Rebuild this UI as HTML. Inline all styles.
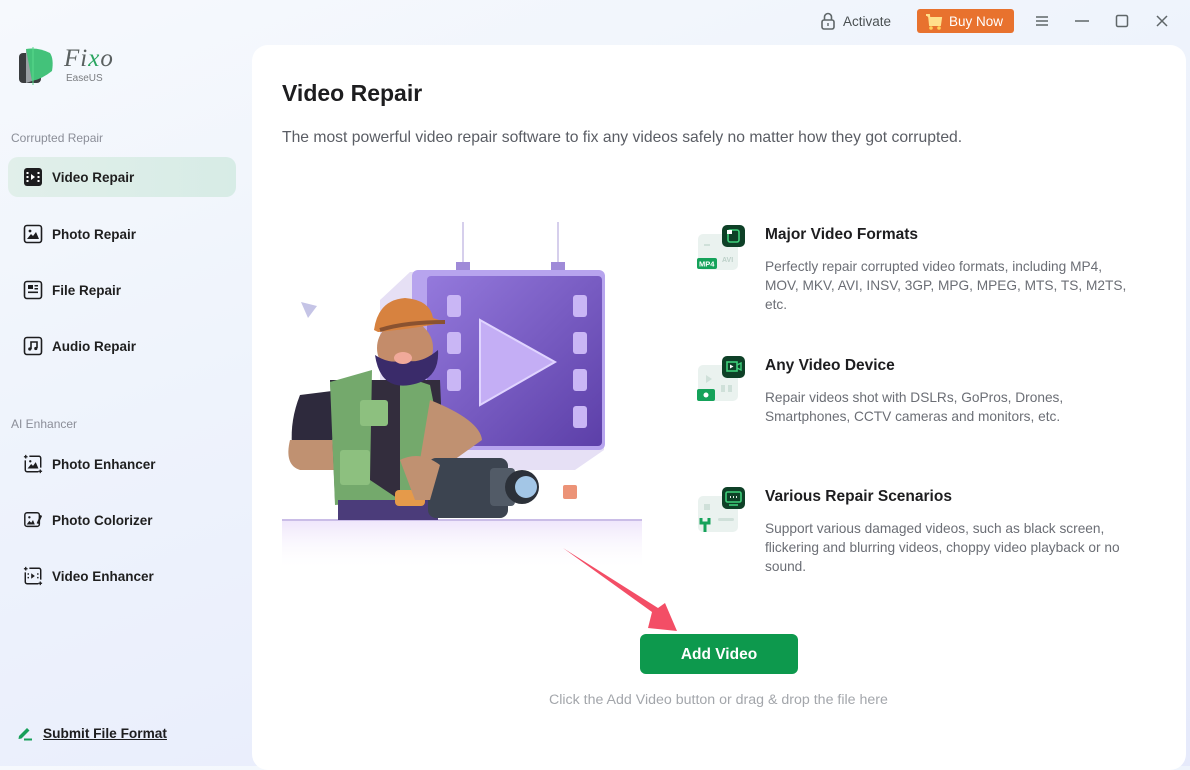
<!DOCTYPE html>
<html><head><meta charset="utf-8"><style>
*{margin:0;padding:0;box-sizing:border-box}
body{width:1190px;height:766px;overflow:hidden;font-family:"Liberation Sans",sans-serif;background:linear-gradient(160deg,#f6f9fd 0%,#eef3fc 40%,#e6eafb 100%);position:relative;color:#1d1d1f}
.abs{position:absolute}
.nav{position:absolute;left:8px;width:228px;height:40px;border-radius:10px;display:flex;align-items:center;padding-left:15px;font-size:13.5px;font-weight:bold;color:#1f1f1f}
.nav svg{margin-right:9px}
.sec{position:absolute;left:11px;font-size:12px;color:#8b8e98}
.panel{position:absolute;left:252px;top:45px;width:934px;height:725px;background:#fff;border-radius:16px}
.ft{position:absolute;left:765px;font-size:15.5px;font-weight:bold;color:#1d1d1f}
.fd{position:absolute;left:765px;width:420px;font-size:13.7px;line-height:19px;color:#6b6e75;white-space:nowrap}
</style></head><body>
<svg class="abs" style="left:18px;top:45px" width="40" height="42" viewBox="0 0 40 42"><rect x="1" y="8" width="22" height="30" rx="4" fill="#3a3d3f"/><path d="M8 4 Q20 2 32 8 Q36 14 34 26 Q24 34 14 36 Q8 28 8 4Z" fill="#43c27a"/><path d="M8 4 L14 36 L8 38Z" fill="#9a9fa3"/><line x1="15" y1="2" x2="15" y2="40" stroke="#58d98c" stroke-width="1"/></svg>
<div class="abs" style="left:64px;top:45px;font-family:'Liberation Serif',serif;font-style:italic;font-size:25px;color:#5a6060;letter-spacing:1px">Fi<span style="color:#2aa560">x</span>o</div>
<div class="abs" style="left:66px;top:73px;font-size:10px;color:#7a7d80">EaseUS</div>

<div class="sec" style="top:131px">Corrupted Repair</div>
<div class="nav" style="top:157px;background:linear-gradient(90deg,#e1efea,#d7ece6)"><svg width="20" height="20" viewBox="0 0 20 20"><rect x="1" y="1" width="18" height="18" rx="3" fill="#1d1d1f"/><rect x="3.5" y="5" width="2" height="2" fill="#fff"/><rect x="3.5" y="9" width="2" height="2" fill="#fff"/><rect x="3.5" y="13" width="2" height="2" fill="#fff"/><rect x="14.5" y="5" width="2" height="2" fill="#fff"/><rect x="14.5" y="9" width="2" height="2" fill="#fff"/><rect x="14.5" y="13" width="2" height="2" fill="#fff"/><path d="M8 7 L12 10 L8 13Z" fill="#fff"/></svg>Video Repair</div>
<div class="nav" style="top:214px"><svg width="20" height="20" viewBox="0 0 20 20"><rect x="1.5" y="1.5" width="17" height="17" rx="2.5" fill="none" stroke="#1d1d1f" stroke-width="1.6"/><circle cx="7" cy="7" r="1.4" fill="#1d1d1f"/><path d="M4 15 L8 10 L10 12 L13 8 L16 15Z" fill="#1d1d1f"/></svg>Photo Repair</div>
<div class="nav" style="top:270px"><svg width="20" height="20" viewBox="0 0 20 20"><rect x="1.5" y="1.5" width="17" height="17" rx="2.5" fill="none" stroke="#1d1d1f" stroke-width="1.6"/><rect x="5" y="5" width="5" height="4" fill="#1d1d1f"/><rect x="11.5" y="5" width="3.5" height="1.5" fill="#1d1d1f"/><rect x="11.5" y="8" width="3.5" height="1.5" fill="#1d1d1f"/><rect x="5" y="11.5" width="10" height="1.6" fill="#1d1d1f"/></svg>File Repair</div>
<div class="nav" style="top:326px"><svg width="20" height="20" viewBox="0 0 20 20"><rect x="1.5" y="1.5" width="17" height="17" rx="2.5" fill="none" stroke="#1d1d1f" stroke-width="1.6"/><path d="M8 13 V6 H14 V12" fill="none" stroke="#1d1d1f" stroke-width="1.6"/><circle cx="6.8" cy="13" r="1.6" fill="#1d1d1f"/><circle cx="12.8" cy="12.5" r="1.6" fill="#1d1d1f"/></svg>Audio Repair</div>

<div class="sec" style="top:417px">AI Enhancer</div>
<div class="nav" style="top:444px"><svg width="20" height="22" viewBox="0 0 22 22"><path d="M7 2.5 H17.5 A2 2 0 0 1 19.5 4.5 V15 M17 19.5 H4.5 A2 2 0 0 1 2.5 17.5 V7" fill="none" stroke="#1d1d1f" stroke-width="1.6"/><path d="M3 1v4M1 3h4M19 17v4M17 19h4" stroke="#1d1d1f" stroke-width="1.4"/><path d="M5 16 L9 11 L11 13 L14 9 L17 16Z" fill="#1d1d1f"/><circle cx="8" cy="8" r="1.3" fill="#1d1d1f"/></svg>Photo Enhancer</div>
<div class="nav" style="top:500px"><svg width="20" height="22" viewBox="0 0 22 22"><rect x="2" y="3" width="16" height="15" rx="2.5" fill="none" stroke="#1d1d1f" stroke-width="1.6"/><path d="M4 16 L7 12 L9 14 L11 11 L13 16Z" fill="#1d1d1f"/><circle cx="7" cy="8" r="1.3" fill="#1d1d1f"/><path d="M20 6 L16 15" stroke="#1d1d1f" stroke-width="2.2"/></svg>Photo Colorizer</div>
<div class="nav" style="top:556px"><svg width="20" height="22" viewBox="0 0 22 22"><path d="M7 2.5 H17.5 A2 2 0 0 1 19.5 4.5 V15 M17 19.5 H4.5 A2 2 0 0 1 2.5 17.5 V7" fill="none" stroke="#1d1d1f" stroke-width="1.6"/><path d="M3 1v4M1 3h4M19 17v4M17 19h4" stroke="#1d1d1f" stroke-width="1.4"/><path d="M9 8 L13 11 L9 14Z" fill="#1d1d1f"/><rect x="5" y="8" width="1.6" height="1.6" fill="#1d1d1f"/><rect x="5" y="12" width="1.6" height="1.6" fill="#1d1d1f"/><rect x="15.5" y="8" width="1.6" height="1.6" fill="#1d1d1f"/><rect x="15.5" y="12" width="1.6" height="1.6" fill="#1d1d1f"/></svg>Video Enhancer</div>

<svg class="abs" style="left:17px;top:725px" width="18" height="16" viewBox="0 0 18 16"><path d="M2 11 L10 3 L12.5 5.5 L4.5 13.5 L1.5 14Z" fill="#17a05a"/><rect x="7" y="13.5" width="8" height="2" fill="#17a05a"/></svg>
<div class="abs" style="left:43px;top:726px;font-size:13.7px;font-weight:bold;text-decoration:underline;color:#1d1d1f">Submit File Format</div>

<svg class="abs" style="left:820px;top:12px" width="16" height="18" viewBox="0 0 16 18"><rect x="2" y="8" width="12" height="9" rx="2" fill="none" stroke="#5f6668" stroke-width="1.6"/><path d="M4.5 8 V5 a3.5 3.5 0 0 1 7 0 V8" fill="none" stroke="#5f6668" stroke-width="1.6"/><rect x="7.3" y="11" width="1.4" height="3" fill="#5f6668"/></svg>
<div class="abs" style="left:843px;top:14px;font-size:13.5px;color:#4a5052">Activate</div>
<div class="abs" style="left:917px;top:9px;width:97px;height:24px;background:#e8722e;border-radius:3px;color:#fff;font-size:13.5px;padding:5px 0 0 32px">Buy Now</div>
<svg class="abs" style="left:925px;top:13px" width="18" height="17" viewBox="0 0 18 17"><path d="M1 2 H4 L5 12 H15 L16 5 H4" fill="#ffe08a" stroke="#ffe08a" stroke-width="2"/><circle cx="6" cy="15" r="1.8" fill="#ffd15a"/><circle cx="14" cy="15" r="1.8" fill="#ffd15a"/></svg>
<svg class="abs" style="left:1034px;top:14px" width="16" height="14"><path d="M2 3h12M2 7h12M2 11h12" stroke="#5f6668" stroke-width="1.5"/></svg>
<svg class="abs" style="left:1074px;top:14px" width="16" height="14"><path d="M1 7h14" stroke="#5f6668" stroke-width="1.5"/></svg>
<svg class="abs" style="left:1114px;top:13px" width="16" height="16"><rect x="2.5" y="2.5" width="11" height="11" rx="1.5" fill="none" stroke="#5f6668" stroke-width="1.5"/></svg>
<svg class="abs" style="left:1154px;top:13px" width="16" height="16"><path d="M3 3l10 10M13 3L3 13" stroke="#5f6668" stroke-width="1.5"/></svg>

<div class="panel"></div>
<div class="abs" style="left:282px;top:80px;font-size:23px;font-weight:bold;color:#1d1d1f">Video Repair</div>
<div class="abs" style="left:282px;top:129px;font-size:15.7px;color:#5a5d64;white-space:nowrap">The most powerful video repair software to fix any videos safely no matter how they got corrupted.</div>

<svg class="abs" style="left:270px;top:215px" width="390" height="360" viewBox="270 215 390 360">
<defs><linearGradient id="fl" x1="0" y1="0" x2="0" y2="1"><stop offset="0" stop-color="#efe6fb"/><stop offset="1" stop-color="#fff" stop-opacity="0"/></linearGradient>
<linearGradient id="sc" x1="0" y1="0" x2="1" y2="1"><stop offset="0" stop-color="#9479dc"/><stop offset="1" stop-color="#5c3fa8"/></linearGradient></defs>
<rect x="282" y="521" width="360" height="50" fill="url(#fl)"/>
<line x1="282" y1="520" x2="642" y2="520" stroke="#b9a7df" stroke-width="1.5"/>
<line x1="463" y1="222" x2="463" y2="265" stroke="#c9bfe6" stroke-width="1.5"/><line x1="558" y1="222" x2="558" y2="265" stroke="#c9bfe6" stroke-width="1.5"/>
<rect x="456" y="262" width="14" height="8" fill="#9f8ad8"/><rect x="551" y="262" width="14" height="8" fill="#9f8ad8"/>
<path d="M410 272 L600 272 L604 450 L575 470 L420 470 L380 440 L380 300Z" fill="#e6e0f5"/>
<rect x="412" y="270" width="193" height="180" rx="6" fill="#b7a4ee"/>
<rect x="427" y="276" width="175" height="170" rx="4" fill="url(#sc)"/>
<path d="M480 320 L555 362 L480 405Z" fill="#c4aef5" stroke="#e0d4ff" stroke-width="2"/>
<g fill="#c9b6f5"><rect x="447" y="295" width="14" height="22" rx="3"/><rect x="447" y="332" width="14" height="22" rx="3"/><rect x="447" y="369" width="14" height="22" rx="3"/><rect x="573" y="295" width="14" height="22" rx="3"/><rect x="573" y="332" width="14" height="22" rx="3"/><rect x="573" y="369" width="14" height="22" rx="3"/><rect x="573" y="406" width="14" height="22" rx="3"/></g>
<path d="M301 302 L317 306 L308 318Z" fill="#c5c4e6"/>
<rect x="563" y="485" width="14" height="14" rx="2" fill="#ec9377"/>
<path d="M300 395 Q290 420 292 445 L330 455 L340 390Z" fill="#2e2a3d"/>
<path d="M290 440 Q284 465 300 470 L360 470 L365 440 Q330 440 292 440Z" fill="#c09171"/>
<path d="M330 380 L440 380 L445 500 L335 500Z" fill="#332d3d"/>
<path d="M330 382 L372 370 L370 480 L400 500 L335 505Z" fill="#74a96c"/>
<path d="M400 375 L430 385 L445 460 L420 500 L400 500Z" fill="#74a96c"/>
<rect x="360" y="400" width="28" height="26" rx="3" fill="#8dc07f"/><rect x="340" y="450" width="30" height="35" rx="3" fill="#8dc07f"/>
<rect x="338" y="500" width="100" height="20" fill="#4b3c7a"/>
<rect x="395" y="490" width="30" height="16" rx="4" fill="#e59a4a"/>
<path d="M430 400 Q480 420 482 440 L440 470 L420 460Z" fill="#c09171"/>
<circle cx="405" cy="348" r="28" fill="#c48c6a"/>
<path d="M375 355 Q380 390 410 385 Q440 380 438 350 Q420 365 405 360 Q390 365 375 355Z" fill="#3a2b6a"/>
<ellipse cx="403" cy="358" rx="9" ry="6" fill="#f0a99a"/>
<path d="M374 330 Q378 300 405 298 Q430 300 433 318 L445 322 Q420 328 378 332Z" fill="#d7823f"/>
<path d="M380 330 Q405 322 445 322" stroke="#8a5230" stroke-width="4" fill="none"/>
<rect x="428" y="458" width="80" height="60" rx="8" fill="#3c4450"/>
<rect x="490" y="468" width="25" height="38" rx="4" fill="#525b67"/>
<circle cx="522" cy="487" r="17" fill="#2c3139"/><circle cx="526" cy="487" r="11" fill="#a3c6e6"/>
<path d="M400 460 Q420 450 440 465 L430 500 L415 500Z" fill="#c09171"/>
</svg>

<svg class="abs" style="left:696px;top:224px" width="52" height="52" viewBox="0 0 52 52"><rect x="2" y="10" width="40" height="36" rx="5" fill="#eaf2ef"/><rect x="8" y="20" width="6" height="2" fill="#cfe0d9"/><text x="26" y="38" font-family="Liberation Sans" font-size="7" fill="#bcd0c8" font-weight="bold">AVI</text><rect x="1" y="34" width="20" height="11" rx="2" fill="#15a25a"/><text x="3" y="42.5" font-family="Liberation Sans" font-size="7.5" fill="#fff" font-weight="bold">MP4</text><rect x="26" y="1" width="23" height="22" rx="5" fill="#0e4027"/><rect x="32" y="6" width="11" height="12" rx="2" fill="none" stroke="#3ecf7a" stroke-width="1.6"/><rect x="31" y="6" width="5" height="4" fill="#fff"/></svg>
<svg class="abs" style="left:696px;top:355px" width="52" height="52" viewBox="0 0 52 52"><rect x="2" y="10" width="40" height="36" rx="5" fill="#eaf2ef"/><path d="M10 20 L16 24 L10 28Z" fill="#cfe0d9"/><rect x="25" y="30" width="4" height="7" fill="#cfe0d9"/><rect x="32" y="30" width="4" height="7" fill="#cfe0d9"/><rect x="1" y="34" width="18" height="12" rx="2" fill="#15a25a"/><circle cx="10" cy="40" r="2.5" fill="#fff"/><rect x="26" y="1" width="23" height="22" rx="5" fill="#0e4027"/><rect x="31" y="7" width="10" height="9" fill="none" stroke="#3ecf7a" stroke-width="1.6"/><path d="M34 9.5 L37.5 11.5 L34 13.5Z" fill="#fff"/><path d="M41 10 L45 8 V15 L41 13" fill="none" stroke="#3ecf7a" stroke-width="1.4"/></svg>
<svg class="abs" style="left:696px;top:486px" width="52" height="52" viewBox="0 0 52 52"><rect x="2" y="10" width="40" height="36" rx="5" fill="#eaf2ef"/><rect x="8" y="18" width="6" height="6" fill="#cfe0d9"/><rect x="22" y="32" width="16" height="3" rx="1.5" fill="#cfe0d9"/><path d="M5 32 V37 H13 V32 M9 37 V46" stroke="#15a25a" stroke-width="3" fill="none"/><rect x="26" y="1" width="23" height="22" rx="5" fill="#0e4027"/><rect x="30" y="6" width="15" height="10" rx="1.5" fill="none" stroke="#3ecf7a" stroke-width="1.6"/><path d="M33 19h9" stroke="#3ecf7a" stroke-width="1.6"/><path d="M34 11h1M37 11h1M40 11h1" stroke="#fff" stroke-width="1.8"/></svg>

<div class="ft" style="top:226px">Major Video Formats</div>
<div class="fd" style="top:257px">Perfectly repair corrupted video formats, including MP4,<br>MOV, MKV, AVI, INSV, 3GP, MPG, MPEG, MTS, TS, M2TS,<br>etc.</div>
<div class="ft" style="top:357px">Any Video Device</div>
<div class="fd" style="top:388px">Repair videos shot with DSLRs, GoPros, Drones,<br>Smartphones, CCTV cameras and monitors, etc.</div>
<div class="ft" style="top:488px">Various Repair Scenarios</div>
<div class="fd" style="top:519px">Support various damaged videos, such as black screen,<br>flickering and blurring videos, choppy video playback or no<br>sound.</div>

<svg class="abs" style="left:555px;top:540px" width="130" height="100" viewBox="555 540 130 100"><path d="M563 548 L652 612 L648 628 L677 631 L665 603 L658 608Z" fill="#f34e66"/></svg>
<div class="abs" style="left:640px;top:634px;width:158px;height:40px;background:#0d994d;border-radius:6px;color:#fff;font-size:15.5px;font-weight:bold;text-align:center;line-height:42px">Add Video</div>
<div class="abs" style="left:549px;top:692px;font-size:14.2px;color:#a3a6ab;white-space:nowrap">Click the Add Video button or drag &amp; drop the file here</div>
</body></html>
